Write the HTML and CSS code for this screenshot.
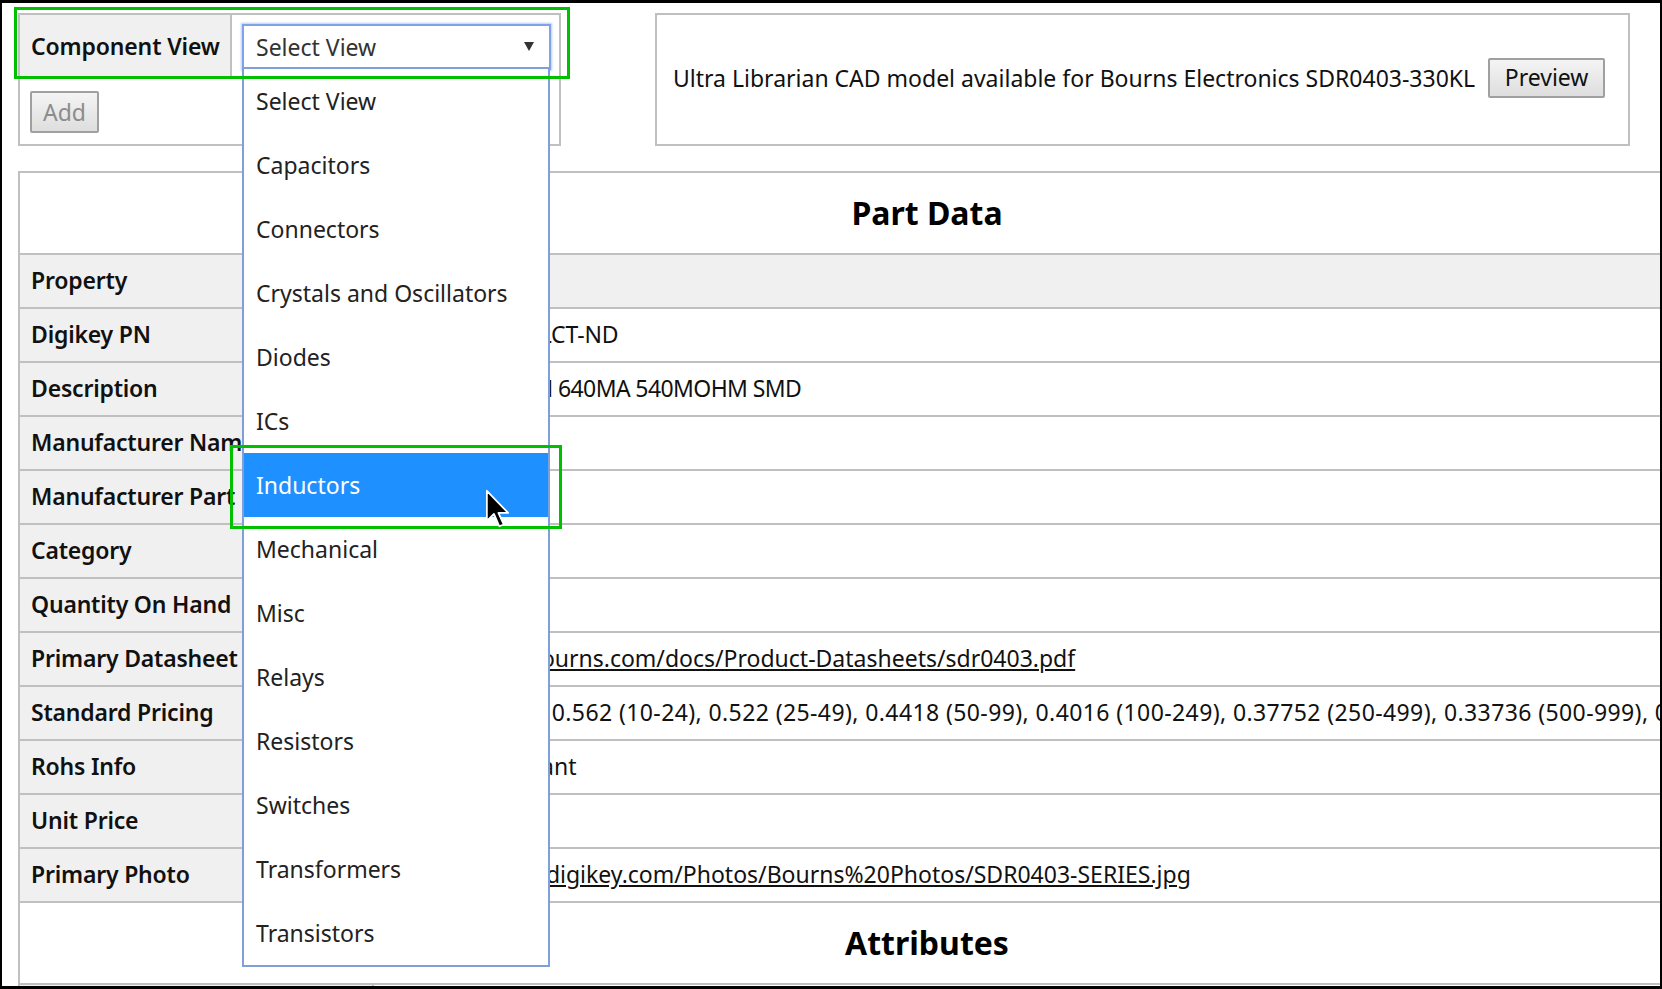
FILE: index.html
```html
<!DOCTYPE html>
<html>
<head>
<meta charset="utf-8">
<title>Part Data</title>
<link rel="stylesheet" href="styles.css">
</head>
<body>
<div class="frame">
  <div class="top">
    <div class="view-panel">
      <div class="view-row">
        <div class="view-label">Component View</div>
        <div class="view-cell">
          <div class="select">
            <span>Select View</span>
            <svg class="arrow" width="10" height="9" viewBox="0 0 10 9"><path d="M0 0H10L5 9Z" fill="#333"/></svg>
            <ul class="dropdown">
              <li>Select View</li>
              <li>Capacitors</li>
              <li>Connectors</li>
              <li>Crystals and Oscillators</li>
              <li>Diodes</li>
              <li>ICs</li>
              <li class="active">Inductors</li>
              <li>Mechanical</li>
              <li>Misc</li>
              <li>Relays</li>
              <li>Resistors</li>
              <li>Switches</li>
              <li>Transformers</li>
              <li>Transistors</li>
            </ul>
          </div>
        </div>
      </div>
      <div class="add-row">
        <button class="btn btn-disabled" disabled>Add</button>
      </div>
    </div>
    <div class="cad-panel">
      <span class="cad-text">Ultra Librarian CAD model available for Bourns Electronics SDR0403-330KL</span>
      <button class="btn btn-preview">Preview</button>
    </div>
  </div>

  <div class="part">
    <div class="part-head">Part Data</div>
    <div class="row row-head"><div class="k">Property</div><div class="v">Value</div></div>
    <div class="row"><div class="k">Digikey PN</div><div class="v v-pn">SDR0403-330KLCT-ND</div></div>
    <div class="row"><div class="k">Description</div><div class="v v-desc">FIXED IND 33UH 640MA 540MOHM SMD</div></div>
    <div class="row"><div class="k">Manufacturer Name</div><div class="v">Bourns Inc.</div></div>
    <div class="row"><div class="k">Manufacturer Part</div><div class="v">SDR0403-330</div></div>
    <div class="row"><div class="k">Category</div><div class="v">Inductors</div></div>
    <div class="row"><div class="k">Quantity On Hand</div><div class="v">10</div></div>
    <div class="row"><div class="k">Primary Datasheet</div><div class="v v-sheet"><a href="#">https://www.bourns.com/docs/Product-Datasheets/sdr0403.pdf</a></div></div>
    <div class="row"><div class="k">Standard Pricing</div><div class="v v-price">0.63000 (1-9), 0.562 (10-24), 0.522 (25-49), 0.4418 (50-99), 0.4016 (100-249), 0.37752 (250-499), 0.33736 (500-999), 0.30522 (1000-2499)</div></div>
    <div class="row"><div class="k">Rohs Info</div><div class="v">ROHS3 Compliant</div></div>
    <div class="row"><div class="k">Unit Price</div><div class="v">0.63</div></div>
    <div class="row"><div class="k">Primary Photo</div><div class="v v-photo"><a href="#">https://media.digikey.com/Photos/Bourns%20Photos/SDR0403-SERIES.jpg</a></div></div>
    <div class="part-head">Attributes</div>
    <div class="row row-blank"><div class="k"></div><div class="v"></div></div>
  </div>

  <div class="mark mark-select"></div>
  <div class="mark mark-item"></div>
  <svg class="cursor" width="25" height="39" viewBox="-1 -1 14 22"><path d="M0 0V17L4 13L7 20L9.5 19L6.5 12.5H12Z" fill="#000" stroke="#fff" stroke-width="1" stroke-linejoin="round"/></svg>
</div>
</body>
</html>
```

FILE: styles.css
```css
html, body {
  margin: 0;
  padding: 0;
  background: #fff;
}

.frame {
  position: relative;
  width: 1662px;
  height: 989px;
  box-sizing: border-box;
  border-style: solid;
  border-color: #000;
  border-width: 3px 2px 3px 2px;
  padding: 10px 0 0 16px;
  overflow: hidden;
  font-family: "Noto Sans", sans-serif;
  font-size: 23px;
  color: #111;
  background: #fff;
}

.top {
  display: flex;
  align-items: flex-start;
  gap: 94px;
  height: 133px;
  margin-bottom: 25px;
}

.view-panel {
  width: 543px;
  height: 133px;
  box-sizing: border-box;
  border: 2px solid #c0c0c0;
}

.view-row {
  display: flex;
  height: 62px;
}

.view-label {
  width: 212px;
  box-sizing: border-box;
  background: #f0f0f0;
  border-right: 2px solid #c0c0c0;
  padding-left: 11px;
  display: flex;
  align-items: center;
  font-weight: 600;
  letter-spacing: -0.15px;
}

.view-cell {
  padding: 9px 0 0 10px;
}

.select {
  position: relative;
  width: 309px;
  height: 46px;
  box-sizing: border-box;
  border: 2px solid #7ea3e6;
  box-shadow: 0 0 2px 1px #b4cdf4;
  background: #fff;
  display: flex;
  align-items: center;
  padding-left: 12px;
  padding-bottom: 1px;
  color: #333;
}

.select .arrow {
  position: absolute;
  right: 15px;
  top: 16px;
}

.dropdown {
  position: absolute;
  left: -2px;
  top: 41px;
  width: 308px;
  margin: 0;
  padding: 0;
  list-style: none;
  box-sizing: border-box;
  border: 2px solid #7f9fd8;
  background: #fff;
  z-index: 5;
}

.dropdown li {
  height: 64px;
  display: flex;
  align-items: center;
  padding-left: 12px;
  padding-bottom: 1px;
  box-sizing: border-box;
  color: #222;
}

.dropdown li.active {
  background: #1e90ff;
  color: #fff;
}

.add-row {
  padding: 14px 0 0 10px;
}

.btn {
  font-family: "Noto Sans", sans-serif;
  font-size: 23px;
  box-sizing: border-box;
  border: 2px solid #a0a0a0;
  border-radius: 2px;
  background: linear-gradient(#f4f4f4, #dedede);
  padding: 0;
  line-height: 1;
}

.btn-disabled {
  width: 69px;
  height: 42px;
  color: #8c8c8c;
}

.cad-panel {
  width: 975px;
  height: 133px;
  box-sizing: border-box;
  border: 2px solid #c0c0c0;
  display: flex;
  align-items: center;
  padding-left: 16px;
  padding-bottom: 4px;
}

.cad-text {
  white-space: nowrap;
}

.btn-preview {
  margin-left: 13px;
  width: 117px;
  height: 40px;
  color: #111;
}

.part {
  width: 1814px;
  border-left: 2px solid #c0c0c0;
  border-right: 2px solid #c0c0c0;
}

.part-head {
  height: 82px;
  box-sizing: border-box;
  border-top: 2px solid #c0c0c0;
  display: flex;
  align-items: center;
  justify-content: center;
  font-size: 32px;
  font-weight: 700;
  color: #000;
  padding-bottom: 2px;
}

.row {
  display: flex;
  height: 54px;
  box-sizing: border-box;
  border-top: 2px solid #c0c0c0;
}

.row-head {
  background: #f0f0f0;
}

.k {
  width: 354px;
  flex: none;
  box-sizing: border-box;
  background: #f0f0f0;
  border-right: 2px solid #c0c0c0;
  padding-left: 11px;
  padding-bottom: 2px;
  display: flex;
  align-items: center;
  font-weight: 600;
  letter-spacing: -0.2px;
  white-space: nowrap;
}

.v {
  padding-left: 10px;
  padding-bottom: 2px;
  display: flex;
  align-items: center;
  white-space: nowrap;
}

.v-pn {
  letter-spacing: -0.15px;
}

.v-desc {
  letter-spacing: -0.6px;
}

.v-sheet {
  padding-left: 14px;
}

.v-price {
  padding-left: 21px;
  letter-spacing: 0.4px;
}

.v-photo {
  padding-left: 19px;
}

.v a {
  color: #111;
  text-decoration: underline;
}

.mark {
  position: absolute;
  box-sizing: border-box;
  border: 3px solid #00c000;
  z-index: 8;
}

.mark-select {
  left: 12px;
  top: 4px;
  width: 556px;
  height: 72px;
}

.mark-item {
  left: 228px;
  top: 442px;
  width: 332px;
  height: 84px;
}

.cursor {
  position: absolute;
  left: 483px;
  top: 486px;
  z-index: 9;
}
```
